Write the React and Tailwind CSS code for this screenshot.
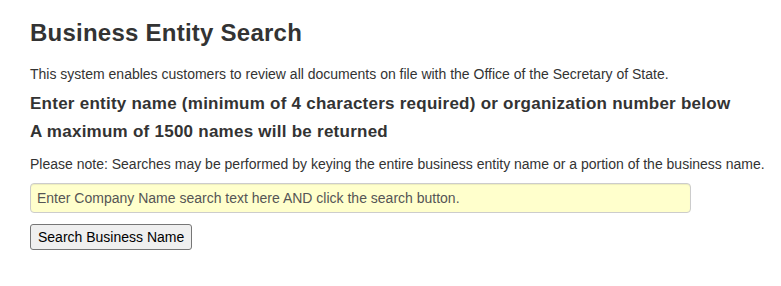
export default function App() {
  return (
    <div className="min-h-[286px] w-full bg-white px-[30px] pt-[20px] text-[#333333]" style={{ fontFamily: '"Liberation Sans", Arial, sans-serif' }}>
      <h1 className="text-[24px] leading-[26px] font-bold tracking-[0.24px]">Business Entity Search</h1>
      <p className="mt-[19px] text-[14px] leading-[18px]">
        This system enables customers to review all documents on file with the Office of the Secretary of State.
      </p>
      <h3 className="mt-[11px] text-[17px] leading-[20px] font-bold tracking-[0.25px]">
        Enter entity name (minimum of 4 characters required) or organization number below
      </h3>
      <h3 className="mt-[8px] text-[17px] leading-[20px] font-bold tracking-[0.25px]">A maximum of 1500 names will be returned</h3>
      <p className="mt-[13px] text-[14px] leading-[18px] whitespace-nowrap">
        Please note: Searches may be performed by keying the entire business entity name or a portion of the business name.
      </p>
      <div className="mt-[10px] flex flex-col items-start gap-[11px]">
        <input
          type="text"
          placeholder="Enter Company Name search text here AND click the search button."
          className="h-[30px] w-[661px] rounded-[4px] border border-[#cccccc] bg-[#ffffcc] px-[6px] text-[14px] text-[#555555] placeholder:text-[#555555] shadow-[inset_0_1px_1px_rgba(0,0,0,0.075)] outline-none"
        />
        <button className="h-[26px] rounded-[3px] border border-[#767676] bg-[#efefef] px-[7px] text-[14px] text-black">
          Search Business Name
        </button>
      </div>
    </div>
  );
}
